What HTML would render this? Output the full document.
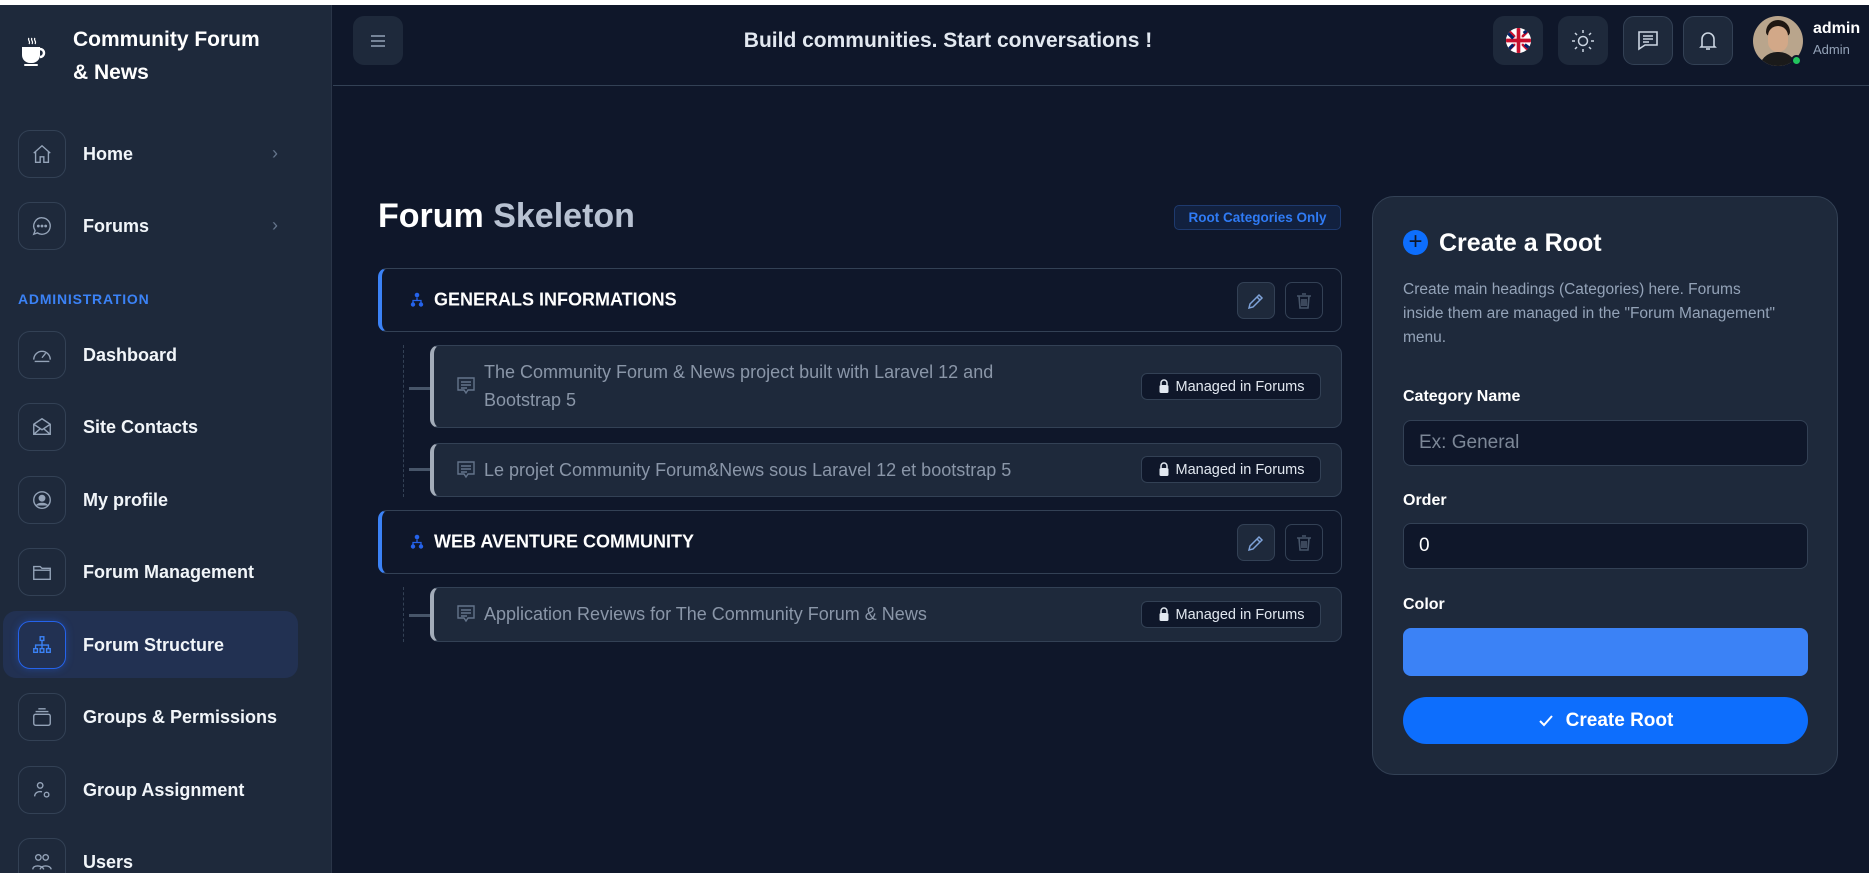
<!DOCTYPE html>
<html><head><meta charset="utf-8"><style>
*{box-sizing:border-box;margin:0;padding:0}
body{width:1869px;height:878px;background:#fff;font-family:"Liberation Sans",sans-serif;position:relative;overflow:hidden}
.abs{position:absolute}
#app{position:absolute;left:0;top:5px;width:1869px;height:868px;background:#0f172a}
#side{position:absolute;left:0;top:5px;width:332px;height:868px;background:#1e293b;border-right:1px solid #2a3548;overflow:hidden}
.mi{position:absolute;left:18px;width:48px;height:48px;border:1px solid #334155;border-radius:12px;display:flex;align-items:center;justify-content:center}
.mt{position:absolute;left:83px;color:#f1f5f9;font-size:18px;font-weight:bold}
.chev{position:absolute;left:272px;color:#64748b;font-size:18px}
.hb{position:absolute;top:16px;width:50px;height:49px;border-radius:11px;background:#1e293b;display:flex;align-items:center;justify-content:center}
.cat{position:absolute;left:378px;width:964px;height:64px;border:1px solid #334155;border-left:4px solid #3b82f6;border-radius:9px;background:#0f172a}
.cat .t{position:absolute;left:52px;top:50%;transform:translateY(-50%);color:#fff;font-weight:bold;font-size:18px}
.ci{position:absolute;left:28px;top:50%;transform:translateY(-50%)}
.btn{position:absolute;top:13px;width:38px;height:37px;border-radius:7px;border:1px solid #334155;display:flex;align-items:center;justify-content:center}
.ch{position:absolute;left:430px;width:912px;border:1px solid #334155;border-left:4px solid #a3acb9;border-radius:9px;background:#1e293b}
.ch .t{position:absolute;left:50px;color:#8a96a8;font-size:18px;line-height:28px}
.ch .ic{position:absolute;left:22px}
.bd{position:absolute;right:20px;width:180px;height:27px;border:1px solid #334155;border-radius:6px;background:#0f172a;color:#e2e8f0;font-size:14.5px;display:flex;align-items:center;justify-content:center;gap:6px}
.lbl{position:absolute;left:1403px;color:#fff;font-weight:bold;font-size:16px}
.inp{position:absolute;left:1403px;width:405px;height:46px;background:#0f172a;border:1px solid #334155;border-radius:8px;font-size:19px;padding-left:15px;display:flex;align-items:center}
</style></head><body>
<div id="app"></div>
<div id="side">
 <svg class="abs" style="left:19px;top:31px" width="28" height="32" viewBox="0 0 28 32"><path d="M10 2c-2 2 2 3 0 6M13 2c-2 2 2 3 0 6M16 2c-2 2 2 3 0 6" stroke="#fff" fill="none" stroke-width="1.2"/><path d="M3 11h18v8a8 8 0 0 1-8 8h-2a8 8 0 0 1-8-8z" fill="#fff"/><path d="M21 13a4 4 0 0 1 0 8" stroke="#fff" stroke-width="2.5" fill="none"/><rect x="5" y="28" width="14" height="2" rx="1" fill="#fff"/></svg>
 <div class="abs" style="left:73px;top:18px;color:#fff;font-weight:bold;font-size:21px;line-height:33px">Community Forum<br>&amp; News</div>
 <div class="mi" style="top:125px"><svg width="22" height="22" viewBox="0 0 24 24" fill="none" stroke="#94a3b8" stroke-width="1.5"><path d="M3 11l9-8 9 8M5 9v12h5v-6h4v6h5V9"/></svg></div><div class="mt" style="top:139px">Home</div><div class="chev" style="top:138px">›</div>
 <div class="mi" style="top:197px"><svg width="22" height="22" viewBox="0 0 24 24" fill="none" stroke="#94a3b8" stroke-width="1.5"><path d="M12 3a9 9 0 1 1-5 16.5L3 21l1.5-4A9 9 0 0 1 12 3z"/><circle cx="8" cy="12" r=".8" fill="#94a3b8"/><circle cx="12" cy="12" r=".8" fill="#94a3b8"/><circle cx="16" cy="12" r=".8" fill="#94a3b8"/></svg></div><div class="mt" style="top:211px">Forums</div><div class="chev" style="top:210px">›</div>
 <div class="abs" style="left:18px;top:286px;color:#3b82f6;font-size:14px;font-weight:bold;letter-spacing:.8px">ADMINISTRATION</div>
 <div class="mi" style="top:326px"><svg width="22" height="22" viewBox="0 0 24 24" fill="none" stroke="#94a3b8" stroke-width="1.5"><path d="M3 17a9 9 0 1 1 18 0M4 19h16M12 15l4-5"/></svg></div><div class="mt" style="top:340px">Dashboard</div>
 <div class="mi" style="top:398px"><svg width="22" height="22" viewBox="0 0 24 24" fill="none" stroke="#94a3b8" stroke-width="1.5"><path d="M3 9l9-6 9 6v11H3zM3 9l9 6 9-6M3 20l7-6M21 20l-7-6"/></svg></div><div class="mt" style="top:412px">Site Contacts</div>
 <div class="mi" style="top:471px"><svg width="22" height="22" viewBox="0 0 24 24" fill="none" stroke="#94a3b8" stroke-width="1.5"><circle cx="12" cy="12" r="9"/><circle cx="12" cy="10" r="3" fill="#94a3b8"/><path d="M6 18c2-3 10-3 12 0" fill="#94a3b8"/></svg></div><div class="mt" style="top:485px">My profile</div>
 <div class="mi" style="top:543px"><svg width="22" height="22" viewBox="0 0 24 24" fill="none" stroke="#94a3b8" stroke-width="1.5"><path d="M3 6h7l2 2h9v12H3zM3 10h18"/></svg></div><div class="mt" style="top:557px">Forum Management</div>
 <div class="abs" style="left:3px;top:606px;width:295px;height:67px;background:#223152;border-radius:13px"></div>
 <div class="mi" style="top:616px;border-color:#2563eb;box-shadow:0 0 8px rgba(37,99,235,.4)"><svg width="22" height="22" viewBox="0 0 24 24" fill="none" stroke="#3b82f6" stroke-width="1.5"><rect x="10" y="3" width="4" height="4"/><rect x="3" y="16" width="4" height="4"/><rect x="10" y="16" width="4" height="4"/><rect x="17" y="16" width="4" height="4"/><path d="M12 7v5M5 16v-4h14v4M12 12v4"/></svg></div><div class="mt" style="top:630px">Forum Structure</div>
 <div class="mi" style="top:688px"><svg width="22" height="22" viewBox="0 0 24 24" fill="none" stroke="#94a3b8" stroke-width="1.5"><rect x="3" y="9" width="18" height="12" rx="2"/><path d="M5 6h14M8 3h8"/></svg></div><div class="mt" style="top:702px">Groups &amp; Permissions</div>
 <div class="mi" style="top:761px"><svg width="22" height="22" viewBox="0 0 24 24" fill="none" stroke="#94a3b8" stroke-width="1.5"><circle cx="10" cy="7" r="3"/><path d="M4 19c0-4 4-6 8-5"/><circle cx="17" cy="17" r="2.5"/></svg></div><div class="mt" style="top:775px">Group Assignment</div>
 <div class="mi" style="top:833px"><svg width="22" height="22" viewBox="0 0 24 24" fill="none" stroke="#94a3b8" stroke-width="1.5"><circle cx="8" cy="7" r="3"/><circle cx="16" cy="7" r="3"/><path d="M2 20c0-5 10-5 12 0M10 20c1-5 11-5 12 0"/></svg></div><div class="mt" style="top:847px">Users</div>
</div>
<!-- header -->
<div class="abs" style="left:333px;top:85px;width:1536px;height:1px;background:#334155"></div>
<div class="hb" style="left:353px"><svg width="18" height="16" viewBox="0 0 18 16" stroke="#94a3b8" stroke-width="1.5"><path d="M2 3h14M2 8h14M2 13h14"/></svg></div>
<div class="abs" style="left:600px;width:696px;top:29px;text-align:center;color:#e2e8f0;font-weight:bold;font-size:21px">Build communities. Start conversations !</div>
<div class="hb" style="left:1493px"><svg width="25" height="25" viewBox="0 0 24 24"><defs><clipPath id="c"><circle cx="12" cy="12" r="12"/></clipPath></defs><g clip-path="url(#c)"><rect width="24" height="24" fill="#fff"/><path d="M0 0L24 24M24 0L0 24" stroke="#c8102e" stroke-width="2.5"/><path d="M12 0v24M0 12h24" stroke="#fff" stroke-width="6"/><path d="M12 0v24M0 12h24" stroke="#c8102e" stroke-width="3.5"/><path d="M2 5l5 5M17 5l5-4M3 20l4-4M22 19l-4-3" stroke="#012169" stroke-width="3"/></g></svg></div>
<div class="hb" style="left:1558px"><svg width="24" height="24" viewBox="0 0 24 24" fill="none" stroke="#cbd5e1" stroke-width="1.5"><circle cx="12" cy="12" r="4.5"/><path d="M12 1v3M12 20v3M1 12h3M20 12h3M4 4l2 2M18 18l2 2M4 20l2-2M18 6l2-2"/></svg></div>
<div class="hb" style="left:1623px;border:1px solid #334155"><svg width="24" height="24" viewBox="0 0 24 24" fill="none" stroke="#cbd5e1" stroke-width="1.6"><path d="M3 3h18v13H9l-6 4z"/><path d="M7 7h10M7 10h10M7 13h6"/></svg></div>
<div class="hb" style="left:1683px;border:1px solid #334155"><svg width="24" height="24" viewBox="0 0 24 24" fill="none" stroke="#cbd5e1" stroke-width="1.6"><path d="M6 17V10a6 6 0 0 1 12 0v7l1 1H5z"/><path d="M10 20h4"/></svg></div>
<div class="abs" style="left:1753px;top:16px;width:50px;height:50px;border-radius:50%;overflow:hidden;background:#b9a58c">
 <div class="abs" style="left:13px;top:4px;width:24px;height:16px;border-radius:12px 12px 4px 4px;background:#1f1712"></div>
 <div class="abs" style="left:15px;top:10px;width:20px;height:26px;border-radius:10px;background:#d2a888"></div>
 <div class="abs" style="left:6px;top:36px;width:38px;height:20px;border-radius:18px 18px 0 0;background:#1a1a1a"></div>
</div>
<div class="abs" style="left:1791px;top:55px;width:11px;height:11px;border-radius:50%;background:#22c55e;border:2px solid #0f172a"></div>
<div class="abs" style="left:1813px;top:20px;color:#fff;font-weight:bold;font-size:16px">admin</div>
<div class="abs" style="left:1813px;top:42px;color:#94a3b8;font-size:13px">Admin</div>
<!-- content -->
<div class="abs" style="left:378px;top:197px;font-size:34px;font-weight:bold;color:#fff">Forum <span style="color:#b8c2d2">Skeleton</span></div>
<div class="abs" style="left:1174px;top:205px;width:167px;height:25px;border:1px solid #1e3a6e;border-radius:5px;background:#12213f;color:#2f7bf5;font-size:13.5px;font-weight:bold;display:flex;align-items:center;justify-content:center">Root Categories Only</div>
<div class="abs" style="left:403px;top:345px;height:152px;border-left:1.5px dashed #334155"></div>
<div class="abs" style="left:403px;top:587px;height:55px;border-left:1.5px dashed #334155"></div>
<div class="abs" style="left:409px;top:387px;width:22px;height:3px;background:#475569"></div>
<div class="abs" style="left:409px;top:468px;width:22px;height:3px;background:#475569"></div>
<div class="abs" style="left:409px;top:614px;width:22px;height:3px;background:#475569"></div>

<svg width="0" height="0" style="position:absolute"><defs>
<g id="tree"><circle cx="7" cy="2.5" r="2.3" fill="#2563eb"/><path d="M7 5v3M3 11V8h8v3" stroke="#2563eb" stroke-width="1.3" fill="none"/><circle cx="3" cy="12" r="2.2" fill="#2563eb"/><circle cx="11" cy="12" r="2.2" fill="#2563eb"/></g>
<g id="msg" fill="none" stroke="#64748b" stroke-width="1.4"><path d="M2 2h16v12h-6l-2 3-2-3H2z"/><path d="M5 6h10M5 9h10M5 12h6"/></g>
<g id="pen" fill="none" stroke="#7ea2d8" stroke-width="1.5"><path d="M3 17l1-4 9-9 3 3-9 9zM11 6l3 3"/></g>
<g id="trash" fill="none" stroke="#475569" stroke-width="1.6"><path d="M3 5h14M8 3h4M5 5l1 12h8l1-12M8 8v7M12 8v7M10 8v7"/></g>
<g id="lock"><path d="M3 6V4a3 3 0 0 1 6 0v2" stroke="#e2e8f0" stroke-width="1.5" fill="none"/><rect x="1.5" y="6" width="9" height="8" rx="1.5" fill="#e2e8f0"/></g>
</defs></svg>

<div class="cat" style="top:268px"><svg class="ci" width="14" height="15"><use href="#tree"/></svg><div class="t">GENERALS INFORMATIONS</div>
 <div class="btn" style="left:855px;background:#1e293b"><svg width="20" height="20"><use href="#pen"/></svg></div>
 <div class="btn" style="left:903px"><svg width="20" height="20"><use href="#trash"/></svg></div></div>
<div class="ch" style="top:345px;height:83px"><svg class="ic" style="top:30px" width="20" height="20"><use href="#msg"/></svg><div class="t" style="top:12px">The Community Forum &amp; News project built with Laravel 12 and<br>Bootstrap 5</div><div class="bd" style="top:27px"><svg width="12" height="15"><use href="#lock"/></svg><span>Managed in Forums</span></div></div>
<div class="ch" style="top:443px;height:54px"><svg class="ic" style="top:16px" width="20" height="20"><use href="#msg"/></svg><div class="t" style="top:12px">Le projet Community Forum&amp;News sous Laravel 12 et bootstrap 5</div><div class="bd" style="top:12px"><svg width="12" height="15"><use href="#lock"/></svg><span>Managed in Forums</span></div></div>
<div class="cat" style="top:510px"><svg class="ci" width="14" height="15"><use href="#tree"/></svg><div class="t">WEB AVENTURE COMMUNITY</div>
 <div class="btn" style="left:855px;background:#1e293b"><svg width="20" height="20"><use href="#pen"/></svg></div>
 <div class="btn" style="left:903px"><svg width="20" height="20"><use href="#trash"/></svg></div></div>
<div class="ch" style="top:587px;height:55px"><svg class="ic" style="top:16px" width="20" height="20"><use href="#msg"/></svg><div class="t" style="top:12px">Application Reviews for The Community Forum &amp; News</div><div class="bd" style="top:13px"><svg width="12" height="15"><use href="#lock"/></svg><span>Managed in Forums</span></div></div>

<!-- right card -->
<div class="abs" style="left:1372px;top:196px;width:466px;height:579px;background:#1e293b;border:1px solid #334155;border-radius:22px"></div>
<div class="abs" style="left:1403px;top:230px;width:25px;height:25px;border-radius:50%;background:#0d6efd;color:#0f172a;font-size:24px;line-height:24px;text-align:center">+</div>
<div class="abs" style="left:1439px;top:229px;color:#fff;font-weight:bold;font-size:25px">Create a Root</div>
<div class="abs" style="left:1403px;top:278px;width:380px;color:#94a3b8;font-size:15.5px;line-height:24px">Create main headings (Categories) here. Forums inside them are managed in the "Forum Management" menu.</div>
<div class="lbl" style="top:388px">Category Name</div>
<div class="inp" style="top:420px;color:#7c8797">Ex: General</div>
<div class="lbl" style="top:492px">Order</div>
<div class="inp" style="top:523px;color:#fff">0</div>
<div class="lbl" style="top:596px">Color</div>
<div class="abs" style="left:1403px;top:628px;width:405px;height:48px;background:#3b82f6;border-radius:8px"></div>
<div class="abs" style="left:1403px;top:697px;width:405px;height:47px;background:#0d6efd;border-radius:24px;color:#fff;font-weight:bold;font-size:19px;display:flex;align-items:center;justify-content:center;gap:12px"><svg width="16" height="14" viewBox="0 0 16 14" fill="none" stroke="#fff" stroke-width="2"><path d="M2 7l4 4 8-9"/></svg>Create Root</div>
</body></html>
